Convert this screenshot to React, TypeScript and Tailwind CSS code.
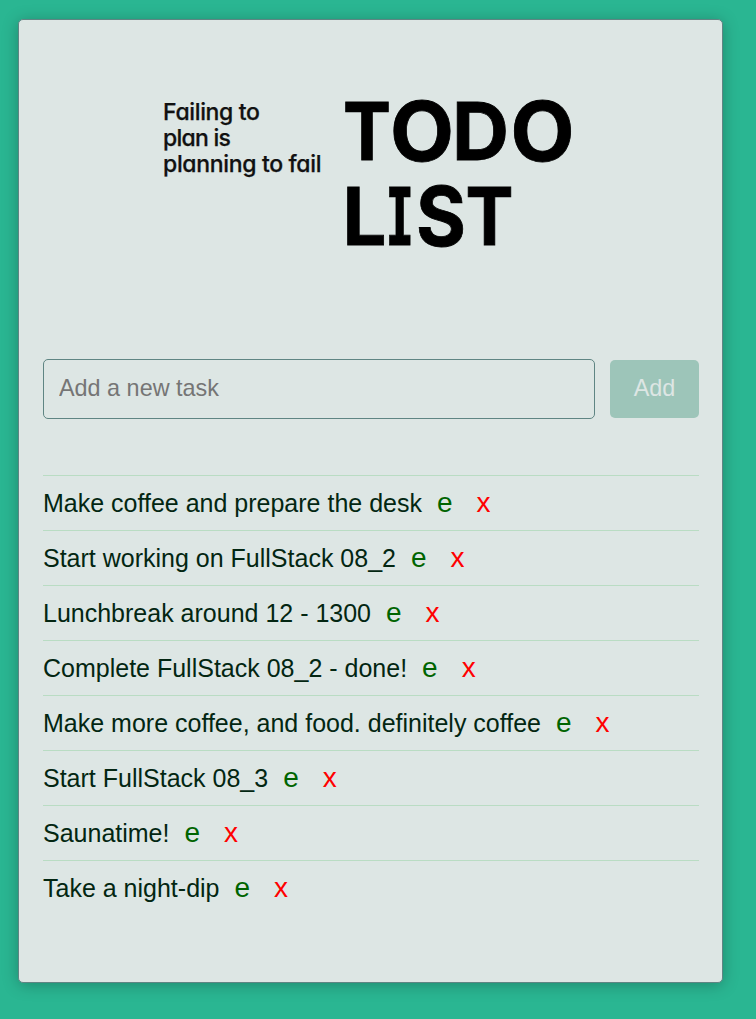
const tasks = [
  'Make coffee and prepare the desk',
  'Start working on FullStack 08_2',
  'Lunchbreak around 12 - 1300',
  'Complete FullStack 08_2 - done!',
  'Make more coffee, and food. definitely coffee',
  'Start FullStack 08_3',
  'Saunatime!',
  'Take a night-dip',
];

// Each wordmark letter: glyph, left edge, baseline, set width, size.
const letters: [string, number, number, number, number][] = [
  ['T', 182, 68, 48, 80],
  ['O', 229, 68.5, 64, 82],
  ['D', 291, 68, 57, 80],
  ['O', 349.5, 68.5, 64, 82],
  ['L', 181.5, 153, 44, 80],
  ['I', 226.5, 153, 24.5, 80],
  ['S', 255, 153.5, 50, 82],
  ['T', 304.5, 153, 48, 80],
];

function Logo() {
  return (
    <svg width="420" height="170" viewBox="0 0 420 170" className="ml-[118px] block" role="img" aria-label="Todo list">
      <g className="font-['Inter',sans-serif] text-[23px] font-medium [font-feature-settings:'cv11']" fill="#111" stroke="#111" strokeWidth="0.25">
        <text x="2" y="28" textLength="97">Failing to</text>
        <text x="2" y="54" textLength="68">plan is</text>
        <text x="2" y="80" textLength="158.5">planning to fail</text>
      </g>
      <g className="font-['Inter',sans-serif] font-bold [font-feature-settings:'cv08']" fill="#000" stroke="#000" strokeWidth="0.8">
        {letters.map(([glyph, x, y, width, size], i) => (
          <text key={i} x={x} y={y} fontSize={size} textLength={width} lengthAdjust="spacingAndGlyphs">{glyph}</text>
        ))}
      </g>
    </svg>
  );
}

export default function App() {
  return (
    <main className="h-[1019px] bg-[#2ab692] pl-[18px] pt-[19px] font-['Liberation_Sans',Arial,sans-serif]">
      <section className="h-[964px] w-[705px] rounded-[5px] border border-[#5f8583] bg-[#dde6e4] pl-6 pr-[23px] pt-[72px] shadow-[0_2px_16px_rgba(0,0,0,0.26)]">
        <Logo />
        <form className="mt-[97px] flex items-center gap-[15px]" onSubmit={(e) => e.preventDefault()}>
          <input
            className="h-[60px] w-[552px] rounded-[5px] border border-[#5f8583] bg-transparent px-[15px] pb-[2px] text-[23.4px] text-[#032612] outline-none placeholder:text-[#757575]"
            placeholder="Add a new task"
          />
          <button className="h-[58px] w-[89px] rounded-[5px] bg-[#9dc5b9] text-[23.4px] text-[#dde6e4]">Add</button>
        </form>
        <ul className="mt-14">
          {tasks.map((task) => (
            <li key={task} className="flex h-[55px] items-baseline border-t border-[#b9dcc3] pt-[9px] text-[25px] leading-[36px] text-[#032612]">
              <span>{task}</span>
              <button className="ml-[15px] text-[28px] leading-[36px] text-[#006400]">e</button>
              <button className="ml-6 text-[28px] leading-[36px] text-[#ff0000]">x</button>
            </li>
          ))}
        </ul>
      </section>
    </main>
  );
}
